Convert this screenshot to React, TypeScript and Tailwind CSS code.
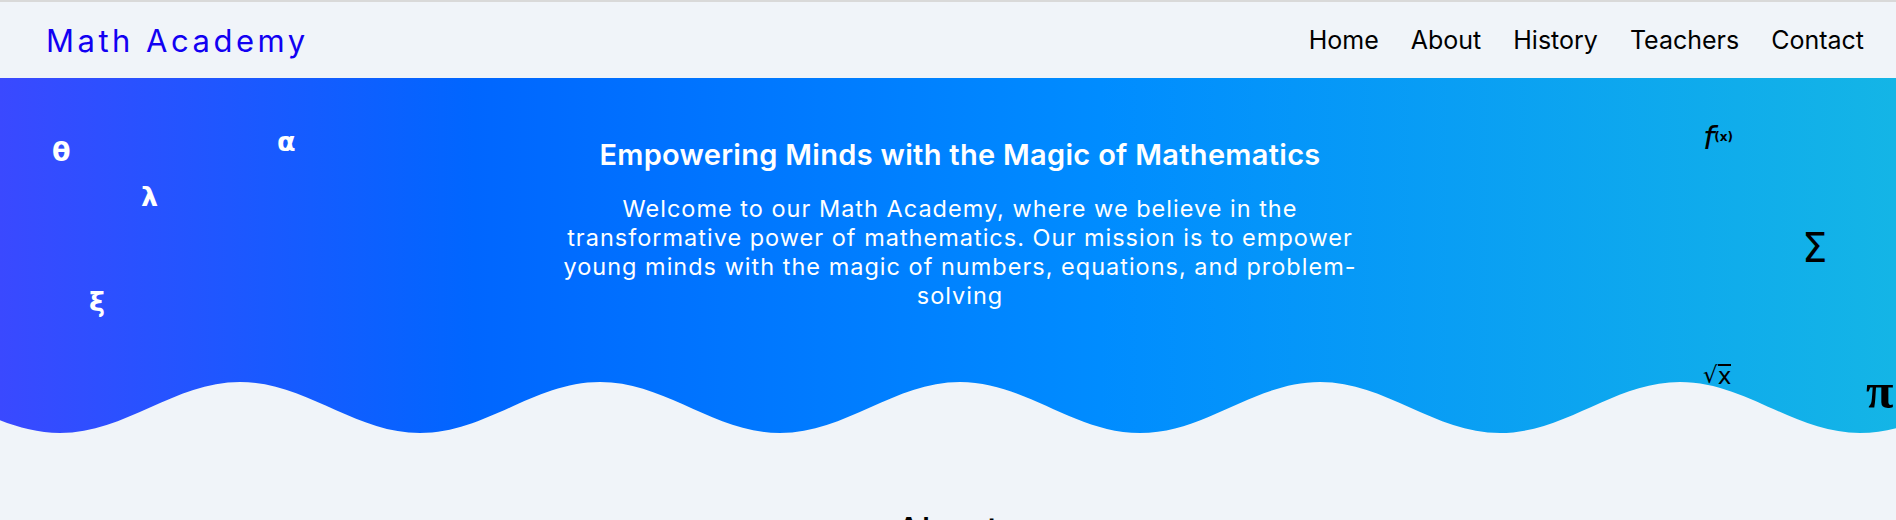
import React from "react";

const navLinks = ["Home", "About", "History", "Teachers", "Contact"];

function wavePath() {
  let d = "M-120,4";
  for (let x = -120; x < 2100; x += 360) {
    d += ` C${x + 66},4 ${x + 114},55 ${x + 180},55 C${x + 246},55 ${x + 294},4 ${x + 360},4`;
  }
  return d + " L2300,60 L-120,60 Z";
}

function Header() {
  return (
    <header className="h-[78px] border-t-2 border-[#d9d9d9] bg-[#f0f4f9] flex items-center justify-between pl-[46px] pr-[32px]">
      <a className="text-[31px] tracking-[3.5px] text-[#1200f2] font-normal leading-none">Math Academy</a>
      <nav className="flex items-center gap-[32px] text-[25px] text-black">
        {navLinks.map((l) => (
          <a key={l} className="leading-none">
            {l}
          </a>
        ))}
      </nav>
    </header>
  );
}

function Hero() {
  return (
    <section className="relative h-[360px] overflow-hidden bg-[linear-gradient(90deg,#3a49ff_0%,#0066ff_25%,#008cff_58%,#14b5e6_100%)]">
      {/* floating symbols */}
      <span className="absolute left-[52px] top-[54px] text-[27px] font-bold text-white font-['DejaVu_Sans',sans-serif]">θ</span>
      <span className="absolute left-[277px] top-[44px] text-[27px] font-bold text-white font-['DejaVu_Sans',sans-serif]">α</span>
      <span className="absolute left-[141px] top-[99px] text-[27px] font-bold text-white font-['DejaVu_Sans',sans-serif]">λ</span>
      <span className="absolute left-[89px] top-[204px] text-[27px] font-bold text-white font-['DejaVu_Sans',sans-serif]">ξ</span>

      <span className="absolute left-[1703px] top-[44px] text-black font-['DejaVu_Sans',sans-serif] leading-none">
        <span className="italic text-[32px]">f</span>
        <span className="text-[12px] font-bold align-[8px]">(x)</span>
      </span>
      <span className="absolute left-[1802px] top-[140px] text-[40px] text-black font-['DejaVu_Sans',sans-serif]">Σ</span>
      <span className="absolute left-[1703px] top-[286px] text-[23px] text-black font-['DejaVu_Sans',sans-serif] leading-none flex items-start">
        <span>√</span>
        <span className="border-t-2 border-black leading-[20px]">x</span>
      </span>
      <span className="absolute left-[1866px] top-[276px] text-[50px] font-bold text-black font-['Liberation_Serif',serif]">π</span>

      <div className="flex flex-col items-center pl-[24px] pt-[60px] text-white">
        <h1 className="text-[29px] font-semibold tracking-[0.3px] leading-[34px]">Empowering Minds with the Magic of Mathematics</h1>
        <p className="mt-[22px] text-center text-[23.5px] tracking-[1px] leading-[29px]">
          Welcome to our Math Academy, where we believe in the
          <br />
          transformative power of mathematics. Our mission is to empower
          <br />
          young minds with the magic of numbers, equations, and problem-
          <br />
          solving
        </p>
      </div>

      <svg className="absolute bottom-0 left-0 w-full h-[60px]" viewBox="0 0 1896 60" preserveAspectRatio="none">
        <path d={wavePath()} fill="#f0f4f9" />
      </svg>
    </section>
  );
}

export default function App() {
  return (
    <div className="min-h-screen bg-[#f0f4f9] font-['Inter',sans-serif]">
      <Header />
      <Hero />
      <section className="flex flex-col items-center pt-[70px] pb-16">
        <h2 className="text-[34px] font-medium tracking-[1px] text-black leading-[44px]">About</h2>
        <p className="mt-6 max-w-[800px] text-center text-[18px] text-gray-700">
          Our academy was founded by passionate educators who wanted every student to discover the joy of mathematics.
        </p>
      </section>
    </div>
  );
}
